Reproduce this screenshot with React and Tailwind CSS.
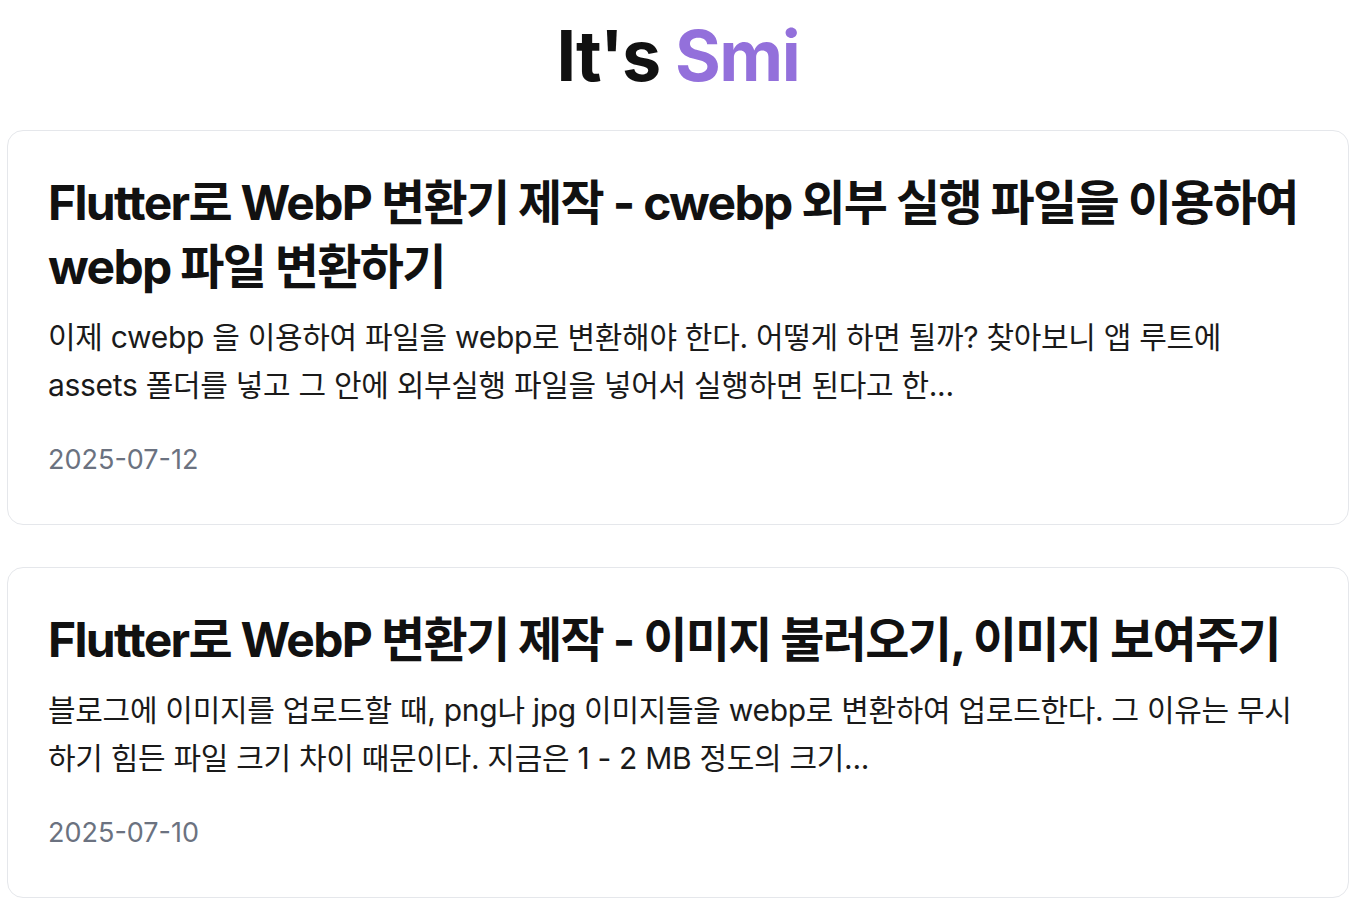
export default function App() {
  const posts = [
    {
      title: "Flutter로 WebP 변환기 제작 - cwebp 외부 실행 파일을 이용하여 webp 파일 변환하기",
      body: "이제 cwebp 을 이용하여 파일을 webp로 변환해야 한다. 어떻게 하면 될까? 찾아보니 앱 루트에 assets 폴더를 넣고 그 안에 외부실행 파일을 넣어서 실행하면 된다고 한...",
      date: "2025-07-12",
    },
    {
      title: "Flutter로 WebP 변환기 제작 - 이미지 불러오기, 이미지 보여주기",
      body: "블로그에 이미지를 업로드할 때, png나 jpg 이미지들을 webp로 변환하여 업로드한다. 그 이유는 무시하기 힘든 파일 크기 차이 때문이다. 지금은 1 - 2 MB 정도의 크기...",
      date: "2025-07-10",
    },
  ];
  return (
    <div
      className="min-h-screen bg-white px-[7px]"
      style={{ fontFamily: 'Inter, "Noto Sans CJK KR", sans-serif' }}
    >
      <h1 className="pt-[21px] mb-[39px] text-center text-[70px] leading-none font-bold tracking-[-0.02em] text-[#111111]">
        It's <span className="text-[#9370db]">Smi</span>
      </h1>
      <div className="flex flex-col gap-[42px]">
        {posts.map((p) => (
          <div
            key={p.date}
            className="rounded-2xl border border-[#e5e7eb] bg-white p-10"
          >
            <h2 className="break-keep text-[48px] leading-[64px] font-bold tracking-[-0.035em] text-[#111111]">
              {p.title}
            </h2>
            <p className="mt-[14px] text-[30px] leading-[48px] tracking-[-0.01em] text-[#1a1a1a]">
              {p.body}
            </p>
            <div className="mt-[27px] text-[27px] leading-[48px] text-[#6b7280]">
              {p.date}
            </div>
          </div>
        ))}
      </div>
    </div>
  );
}
